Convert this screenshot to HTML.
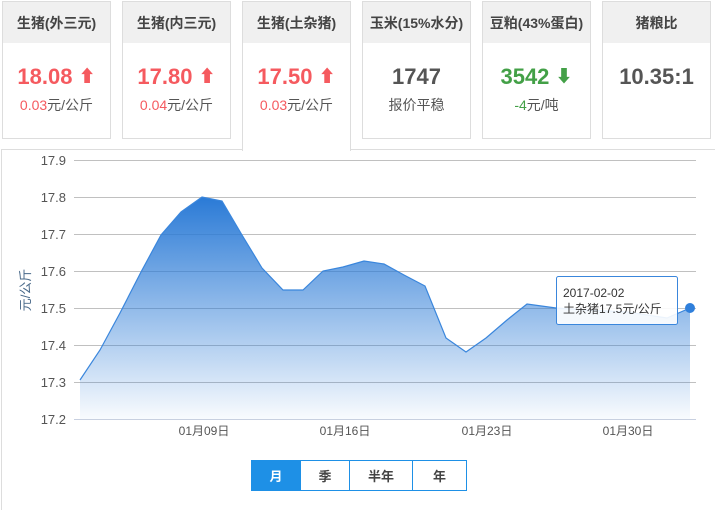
<!DOCTYPE html>
<html><head><meta charset="utf-8"><style>
body{margin:0;width:715px;height:499px;background:#fff;font-family:"Liberation Sans","Noto Sans CJK SC",sans-serif;position:relative;overflow:hidden}
.c{position:absolute;top:1px;width:107px;height:136px;border:1px solid #ddd;background:#fff;text-align:center}
.c .h{height:41px;background:#f0f0f0;font-size:14px;font-weight:bold;color:#444;line-height:42px}
.c .v{font-size:22px;font-weight:bold;margin-top:20px;line-height:28px}
.c .v i{font-style:normal;font-size:17px;vertical-align:2px}
.c .s{font-size:14px;color:#555;margin-top:4px}
.r{color:#f55a5f}.g{color:#43a047}.k{color:#555}
.act{height:149px;border-bottom:none;z-index:2}
.btn{position:absolute;top:460px;height:31px;border:1px solid #1e90e6;line-height:31px;text-align:center;font-size:13px;font-weight:bold;color:#444;box-sizing:border-box}
</style></head><body>
<div class="c" style="left:2px"><div class="h">生猪(外三元)</div><div class="v r">18.08 <i>⬆</i></div><div class="s"><span class="r">0.03</span>元/公斤</div></div>
<div class="c" style="left:122px"><div class="h">生猪(内三元)</div><div class="v r">17.80 <i>⬆</i></div><div class="s"><span class="r">0.04</span>元/公斤</div></div>
<div class="c act" style="left:242px"><div class="h">生猪(土杂猪)</div><div class="v r">17.50 <i>⬆</i></div><div class="s"><span class="r">0.03</span>元/公斤</div></div>
<div class="c" style="left:362px"><div class="h">玉米(15%水分)</div><div class="v k">1747</div><div class="s">报价平稳</div></div>
<div class="c" style="left:482px"><div class="h">豆粕(43%蛋白)</div><div class="v g">3542 <i>⬇</i></div><div class="s"><span class="g">-4</span>元/吨</div></div>
<div class="c" style="left:602px"><div class="h">猪粮比</div><div class="v k">10.35:1</div></div>
<div style="position:absolute;left:1px;top:149px;width:720px;height:360px;border-top:1px solid #ddd;border-left:1px solid #ddd"></div>
<svg width="715" height="499" style="position:absolute;left:0;top:0" font-family="Liberation Sans,Noto Sans CJK SC,sans-serif">
<defs><linearGradient id="gr" x1="0" y1="0" x2="0" y2="1"><stop offset="0" stop-color="#2a7ad6"/><stop offset="1" stop-color="#2a7ad6" stop-opacity="0.03"/></linearGradient></defs>
<g stroke="#c0c0c0" stroke-width="1">
<line x1="74" x2="696" y1="160.5" y2="160.5"/><line x1="74" x2="696" y1="197.5" y2="197.5"/><line x1="74" x2="696" y1="234.5" y2="234.5"/><line x1="74" x2="696" y1="271.5" y2="271.5"/><line x1="74" x2="696" y1="308.5" y2="308.5"/><line x1="74" x2="696" y1="345.5" y2="345.5"/><line x1="74" x2="696" y1="382.5" y2="382.5"/><line x1="74" x2="696" y1="419.5" y2="419.5" stroke="#c8d0e0"/>
</g>
<g font-size="13" fill="#555" text-anchor="end">
<text x="66" y="165">17.9</text><text x="66" y="202">17.8</text><text x="66" y="239">17.7</text><text x="66" y="276">17.6</text><text x="66" y="313">17.5</text><text x="66" y="350">17.4</text><text x="66" y="387">17.3</text><text x="66" y="424">17.2</text>
</g>
<text transform="translate(30,290) rotate(-90)" font-size="13" fill="#4a6a8a" text-anchor="middle">元/公斤</text>
<path d="M80,380 L100,350 L120,313 L141,272 L161,235 L181,212 L202,197 L222,201 L242,235 L262,268 L283,290 L303,290 L323,271 L343,267 L364,261 L384,264 L404,275 L425,286 L446,338 L466,352 L486,338 L507,320 L527,304 L556,308 L586,310 L627,312 L667,318 L690,308 L690,419 L80,419 Z" fill="url(#gr)"/>
<path d="M80,380 L100,350 L120,313 L141,272 L161,235 L181,212 L202,197 L222,201 L242,235 L262,268 L283,290 L303,290 L323,271 L343,267 L364,261 L384,264 L404,275 L425,286 L446,338 L466,352 L486,338 L507,320 L527,304 L556,308 L586,310 L627,312 L667,318 L690,308" fill="none" stroke="#3a86dc" stroke-width="1.2"/>
<circle cx="690" cy="308" r="5" fill="#2f7fdb"/>
<g font-size="12" fill="#555" text-anchor="middle"><text x="204" y="435">01月09日</text><text x="345" y="435">01月16日</text><text x="487" y="435">01月23日</text><text x="628" y="435">01月30日</text></g>
<rect x="556.5" y="276.5" width="121" height="48" rx="2" fill="#fff" fill-opacity="0.9" stroke="#3a86dc"/>
<text x="563" y="297" font-size="12" fill="#333">2017-02-02</text>
<text x="563" y="313" font-size="12" fill="#333">土杂猪17.5元/公斤</text>
</svg>
<div class="btn" style="left:251px;width:50px;background:#1e90e6;color:#fff">月</div>
<div class="btn" style="left:300px;width:50px">季</div>
<div class="btn" style="left:349px;width:64px">半年</div>
<div class="btn" style="left:412px;width:55px">年</div>
</body></html>
